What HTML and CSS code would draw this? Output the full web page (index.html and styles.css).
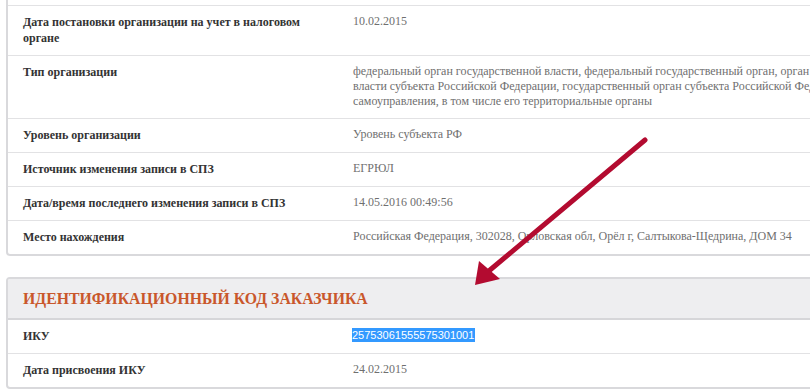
FILE: index.html
```html
<!DOCTYPE html>
<html lang="ru">
<head>
<meta charset="utf-8">
<link rel="stylesheet" href="styles.css">
</head>
<body>
<div class="page">
  <section class="card card-top">
    <div class="row row-cut"><div class="label"></div><div class="value"></div></div>
    <div class="row"><div class="label">Дата постановки организации на учет в налоговом органе</div><div class="value">10.02.2015</div></div>
    <div class="row"><div class="label">Тип организации</div><div class="value nowrap">федеральный орган государственной власти, федеральный государственный орган, орган государственной<br>власти субъекта Российской Федерации, государственный орган субъекта Российской Федерации, орган местного<br>самоуправления, в том числе его территориальные органы</div></div>
    <div class="row"><div class="label">Уровень организации</div><div class="value">Уровень субъекта РФ</div></div>
    <div class="row"><div class="label">Источник изменения записи в СПЗ</div><div class="value">ЕГРЮЛ</div></div>
    <div class="row"><div class="label">Дата/время последнего изменения записи в СПЗ</div><div class="value">14.05.2016 00:49:56</div></div>
    <div class="row"><div class="label">Место нахождения</div><div class="value">Российская Федерация, 302028, Орловская обл, Орёл г, Салтыкова-Щедрина, ДОМ 34</div></div>
  </section>

  <section class="card card-bottom">
    <h2 class="card-title">Идентификационный код заказчика</h2>
    <div class="row"><div class="label">ИКУ</div><div class="value"><span class="selected">25753061555575301001</span></div></div>
    <div class="row"><div class="label">Дата присвоения ИКУ</div><div class="value">24.02.2015</div></div>
  </section>

  <svg class="arrow" width="810" height="391" viewBox="0 0 810 391" xmlns="http://www.w3.org/2000/svg">
    <line x1="645" y1="182" x2="490" y2="312" stroke="#b30b30" stroke-width="5" stroke-linecap="round"/>
    <polygon points="475,327 479,303 500,321" fill="#b30b30"/>
  </svg>
</div>
</body>
</html>
```
FILE: styles.css
```css
html, body {
  margin: 0;
  padding: 0;
  background: #ffffff;
}
body {
  width: 810px;
  height: 391px;
  overflow: hidden;
  font-family: "Liberation Serif", "Times New Roman", serif;
}
.page {
  position: relative;
  padding-left: 6px;
  width: 804px;
  height: 391px;
}
.card {
  width: 1000px;
  border: 2px solid #d9d9dc;
  border-radius: 4px;
  background: #fff;
  box-sizing: border-box;
}
.card-top {
  margin-top: -42px;
}
.card-bottom {
  margin-top: 21px;
}
.row {
  display: grid;
  grid-template-columns: 300px 1fr;
  column-gap: 30px;
  padding: 8px 0 9px 15px;
  border-bottom: 1px solid #e2e2e4;
}
.row:last-child {
  border-bottom: none;
}
.row-cut {
  height: 28px;
}
.label {
  font-weight: bold;
  font-size: 12px;
  line-height: 16px;
  color: #333333;
}
.value {
  font-size: 12px;
  line-height: 15px;
  color: #6f6f6f;
}
.nowrap {
  white-space: nowrap;
}
.card-title {
  margin: 0;
  padding: 10px 15px 10px 15px;
  background: #eeeef0;
  border-bottom: 2px solid #d6d6d9;
  color: #c9572b;
  font-size: 15.8px;
  line-height: 19px;
  font-weight: bold;
  text-transform: uppercase;
  border-radius: 2px 2px 0 0;
}
.selected {
  background: #3399ff;
  color: #ffffff;
  font-family: "Liberation Sans", Arial, sans-serif;
  font-size: 11px;
  line-height: 14px;
  display: inline-block;
  padding: 0 1px 0 0;
  margin-left: -1px;
}
.arrow {
  position: absolute;
  left: 0;
  top: 0;
  pointer-events: none;
}
```
